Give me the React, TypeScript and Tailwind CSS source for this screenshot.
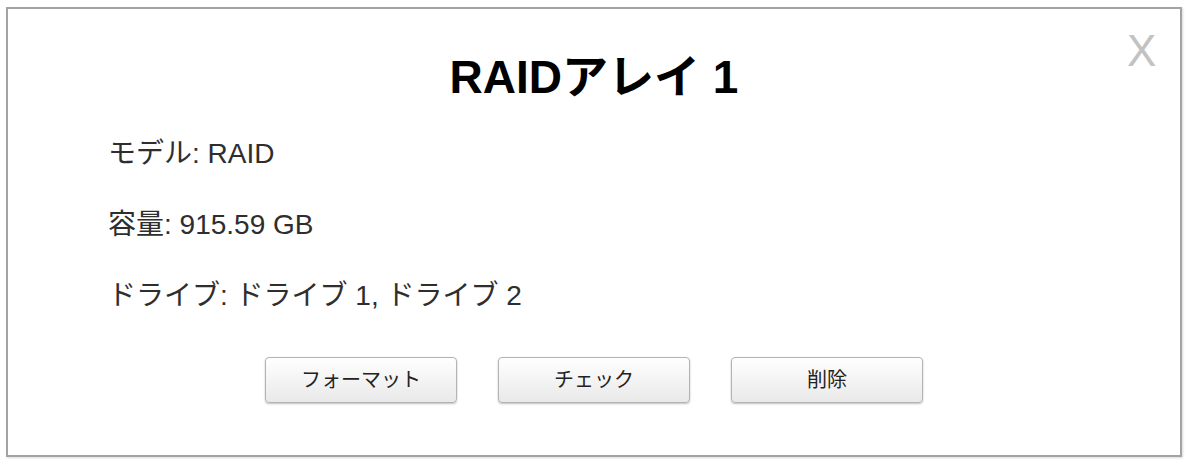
const FONT = '"Liberation Sans", "Noto Sans CJK JP", Arial, sans-serif';

const buttons = ["フォーマット", "チェック", "削除"];

export default function App() {
  return (
    <div className="w-[1187px] h-[462px] bg-white pt-[7px] pl-[6px]" style={{ fontFamily: FONT }}>
      <div className="relative w-[1176px] h-[450px] border-2 border-[#a3a3a3] bg-white shadow-[1px_1px_2px_rgba(0,0,0,0.15)]">
        <button className="absolute left-[1119px] top-[20px] text-[44px] leading-[44px] text-[#c2c2c2]">
          X
        </button>

        <h1 className="pt-[45px] text-center text-[46px] leading-[46px] font-bold text-black">
          RAIDアレイ 1
        </h1>

        <div className="pl-[100px] pt-[40px] flex flex-col gap-[43px] text-[28px] leading-[28px] text-[#2e2e2e]">
          <div>モデル: RAID</div>
          <div>容量: 915.59 GB</div>
          <div>ドライブ: ドライブ 1, ドライブ 2</div>
        </div>

        <div className="mt-[47px] flex justify-center gap-[41px]">
          {buttons.map((b) => (
            <button
              key={b}
              className="w-[192px] h-[46px] rounded-[4px] border border-[#b3b3b3] bg-gradient-to-b from-white to-[#e9e9e9] text-[20px] text-[#222] shadow-[0_1px_2px_rgba(0,0,0,0.25)]"
            >
              {b}
            </button>
          ))}
        </div>
      </div>
    </div>
  );
}
